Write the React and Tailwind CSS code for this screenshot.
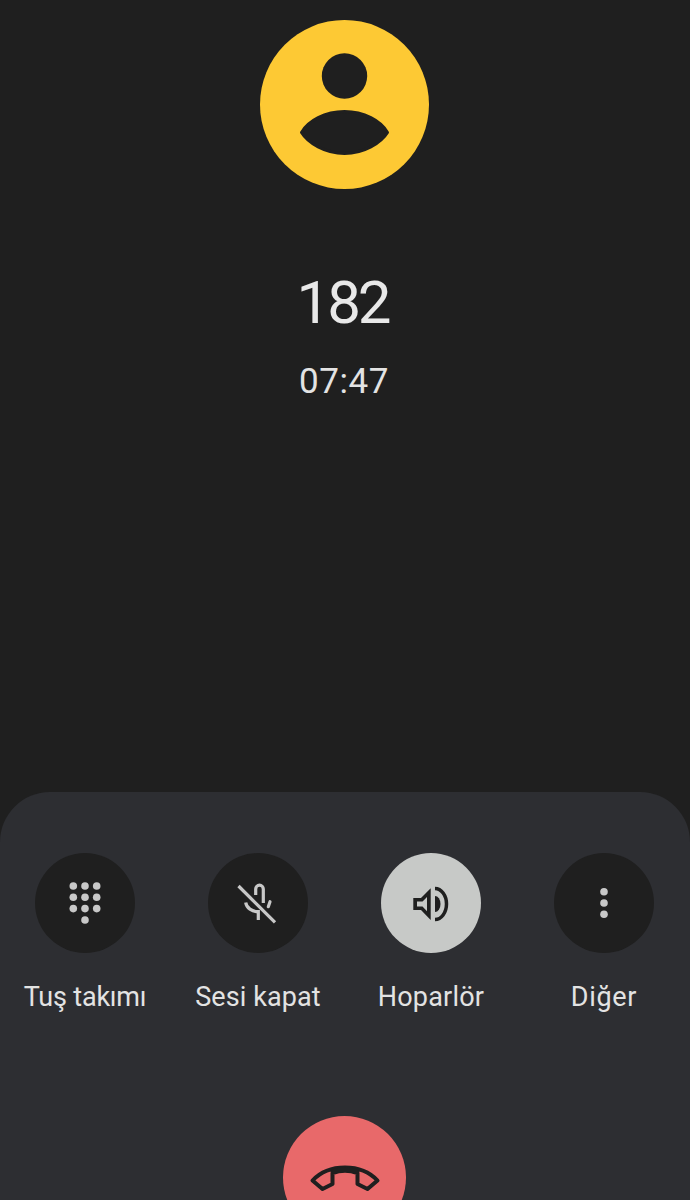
const iconClass = 'w-12 h-12'

function DialpadIcon() {
  const rows = [7, 18.3, 29.6]
  const cols = [12.3, 24, 35.7]
  return (
    <svg viewBox="0 0 48 48" className={iconClass} fill="#c8c8c8">
      {rows.map((y) => cols.map((x) => <circle key={`${x}-${y}`} cx={x} cy={y} r="3.8" />))}
      <circle cx="24" cy="41" r="3.8" />
    </svg>
  )
}

function MicOffIcon() {
  return (
    <svg viewBox="0 0 48 48" className={iconClass} fill="none" stroke="#c8c8c8" strokeWidth="3.2">
      <path d="M21.7 16V10a3.8 3.8 0 0 1 7.6 0V24" />
      <path d="M11.7 23.5C12.5 29 18 32.7 24.3 32.7V41" />
      <path d="M36 22.7L34.3 27.7" strokeLinecap="round" />
      {/* dark gap beside the slash */}
      <path d="M7 5L43.5 41.3" stroke="#1f1f1f" strokeWidth="1.8" />
      <path d="M4.5 7L41 43.3" />
    </svg>
  )
}

function SpeakerIcon() {
  return (
    <svg viewBox="0 0 48 48" className={iconClass} fill="#1f1f1f">
      <path
        fillRule="evenodd"
        d="M6.3 19H14L23.7 9.3V41L14 31H6.3ZM10 22.5V27.5H15.5L20 32.2V18L15.5 22.5Z"
      />
      <path d="M28 17A5.5 8 0 0 1 28 33Z" />
      <path d="M28 9.5A11.5 15.5 0 0 1 28 40.5" fill="none" stroke="#1f1f1f" strokeWidth="3.5" />
    </svg>
  )
}

function MoreIcon() {
  return (
    <svg viewBox="0 0 48 48" className={iconClass} fill="#c8c8c8">
      <circle cx="24" cy="12.7" r="3.8" />
      <circle cx="24" cy="24" r="3.8" />
      <circle cx="24" cy="35.3" r="3.8" />
    </svg>
  )
}

function HangupIcon() {
  return (
    <svg viewBox="0 0 80 40" className="w-20 h-10" fill="none" stroke="#1f1f1f" strokeWidth="4" strokeLinejoin="round">
      <path d="M7.5 22.5C16 13.5 28 9.5 40 9.5C52 9.5 64 13.5 72.5 22.5L62.5 31L52.5 26V15C44 12 36 12 27.5 15V26L17.5 31Z" />
      <path d="M27.5 14C36 10.5 44 10.5 52.5 14" strokeWidth="5" />
    </svg>
  )
}

const actions = [
  { label: 'Tuş takımı', icon: <DialpadIcon />, on: false, track: 'tracking-[-0.2px]' },
  { label: 'Sesi kapat', icon: <MicOffIcon />, on: false, track: 'tracking-[0.1px]' },
  { label: 'Hoparlör', icon: <SpeakerIcon />, on: true, track: 'tracking-[0.2px]' },
  { label: 'Diğer', icon: <MoreIcon />, on: false, track: 'tracking-[0.7px]' },
]

export default function App() {
  return (
    <div className="h-[1200px] w-[690px] overflow-hidden bg-[#1f1f1f] flex flex-col items-center font-['Roboto',sans-serif]">
      <div className="mt-5 -ml-px w-[169px] h-[169px] shrink-0">
        <svg viewBox="0 0 169 169" className="w-[169px] h-[169px]">
          <circle cx="84.5" cy="84.5" r="84.5" fill="#fdc934" />
          <circle cx="84.5" cy="56" r="22.7" fill="#1f1f1f" />
          <path
            d="M41.5 112.5C48 101 65 91.5 84.5 91.5C104 91.5 121 101 127.5 112.5C121 123 104 133.5 84.5 133.5C65 133.5 48 123 41.5 112.5Z"
            fill="#1f1f1f"
            stroke="#1f1f1f"
            strokeWidth="3"
            strokeLinejoin="round"
          />
        </svg>
      </div>

      <h1 className="mt-[78px] -ml-[5px] text-[60px] leading-[72px] font-normal tracking-[-3px] text-[#e8e8e8]">182</h1>
      <p className="mt-[23px] -ml-[2px] text-[35px] leading-[40px] tracking-[0.6px] text-[#e3e3e3]">07:47</p>

      <div className="mt-auto h-[408px] w-full shrink-0 rounded-t-[50px] bg-[#2d2e32] flex flex-col">
        <div className="pt-[61px] pl-[35px] flex gap-[73px]">
          {actions.map((a) => (
            <div key={a.label} className="w-[100px] flex flex-col items-center">
              <div className={`w-[100px] h-[100px] rounded-full flex items-center justify-center ${a.on ? 'bg-[#c7c9c7]' : 'bg-[#1f1f1f]'}`}>
                {a.icon}
              </div>
              <span className={`mt-[26px] text-[27px] leading-[36px] whitespace-nowrap text-[#e3e3e3] ${a.track}`}>{a.label}</span>
            </div>
          ))}
        </div>
        <div className="mt-[101px] flex justify-center">
          <div className="-ml-px w-[123px] h-[123px] rounded-full bg-[#e8696a] flex items-center justify-center">
            <HangupIcon />
          </div>
        </div>
      </div>
    </div>
  )
}
